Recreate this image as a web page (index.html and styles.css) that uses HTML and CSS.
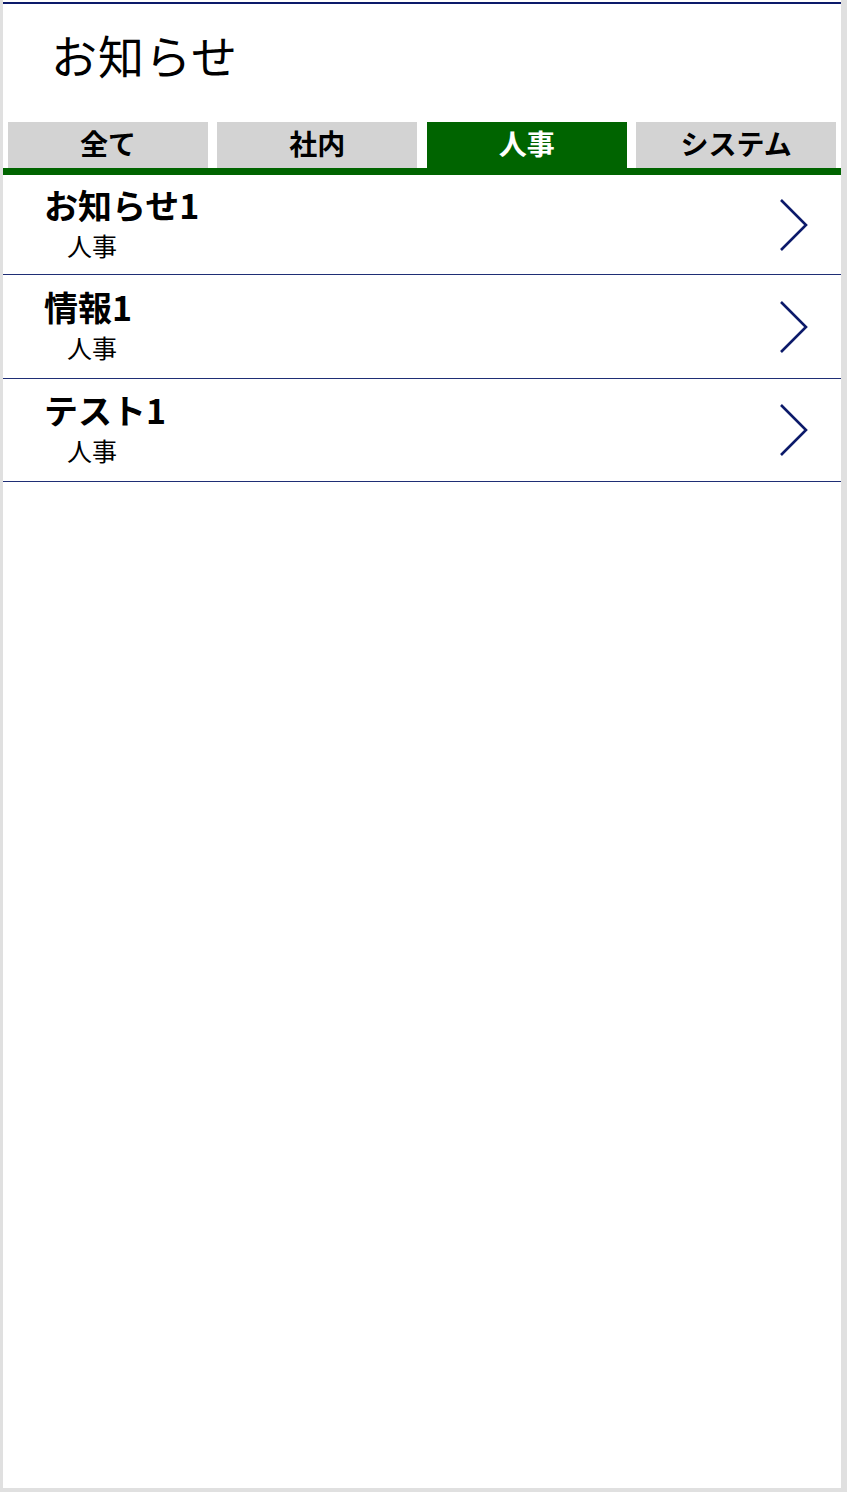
FILE: index.html
```html
<!DOCTYPE html>
<html lang="ja">
<head>
<meta charset="utf-8">
<title>お知らせ</title>
<link rel="stylesheet" href="styles.css">
</head>
<body>
<div class="frame">
  <div class="page">
    <header class="header">
      <h1 class="title">お知らせ</h1>
    </header>
    <nav class="tabs">
      <div class="tab">全て</div>
      <div class="tab">社内</div>
      <div class="tab active">人事</div>
      <div class="tab">システム</div>
    </nav>
    <ul class="list">
      <li class="item">
        <div class="item-text">
          <div class="item-title">お知らせ1</div>
          <div class="item-sub">人事</div>
        </div>
        <svg class="chevron" viewBox="0 0 30 54" width="30" height="54"><polyline points="2,2 27,27 2,52" fill="none" stroke="#0c1a6a" stroke-width="2.6"/></svg>
      </li>
      <li class="item">
        <div class="item-text">
          <div class="item-title">情報1</div>
          <div class="item-sub">人事</div>
        </div>
        <svg class="chevron" viewBox="0 0 30 54" width="30" height="54"><polyline points="2,2 27,27 2,52" fill="none" stroke="#0c1a6a" stroke-width="2.6"/></svg>
      </li>
      <li class="item">
        <div class="item-text">
          <div class="item-title">テスト1</div>
          <div class="item-sub">人事</div>
        </div>
        <svg class="chevron" viewBox="0 0 30 54" width="30" height="54"><polyline points="2,2 27,27 2,52" fill="none" stroke="#0c1a6a" stroke-width="2.6"/></svg>
      </li>
    </ul>
  </div>
</div>
</body>
</html>
```
FILE: styles.css
```css
html, body {
  margin: 0;
  padding: 0;
  background: #e0e0e0;
  font-family: "Noto Sans CJK JP", "Noto Sans", sans-serif;
  color: #000;
}

.frame {
  height: 1492px;
  box-sizing: border-box;
  padding: 0 6px 4px 3px;
}

.frame::before {
  content: "";
  display: block;
  height: 2px;
  background: #fff;
}

.page {
  height: calc(100% - 2px);
  background: #fff;
  border-top: 2px solid #0c1a6a;
  box-sizing: border-box;
}

.header {
  height: 118px;
  box-sizing: border-box;
  padding: 18px 0 0 48px;
}

.title {
  margin: 0;
  font-size: 46px;
  font-weight: 400;
  line-height: 64px;
  letter-spacing: 1px;
}

.tabs {
  display: flex;
  gap: 9.5px;
  padding: 0 5px;
  border-bottom: 7px solid #006400;
}

.tab {
  flex: 1;
  height: 46px;
  background: #d3d3d3;
  text-align: center;
  font-size: 28px;
  font-weight: 700;
  line-height: 42px;
}

.tab.active {
  background: #006400;
  color: #fff;
}

.list {
  list-style: none;
  margin: 0;
  padding: 0;
}

.item {
  display: flex;
  align-items: center;
  justify-content: space-between;
  height: 100px;
  border-bottom: 1px solid #1f2e75;
  box-sizing: border-box;
  padding: 0 32px 0 40px;
}

.item:nth-child(2) {
  height: 104px;
}

.item:nth-child(3) {
  height: 103px;
}

.item-text {
  display: flex;
  flex-direction: column;
  margin-top: -5px;
}

.item-title {
  font-size: 34px;
  font-weight: 700;
  line-height: 44px;
  margin-left: 1px;
  margin-bottom: 1px;
}

.item-sub {
  font-size: 25px;
  font-weight: 400;
  line-height: 34px;
  padding-left: 24px;
}

.chevron {
  display: block;
}
```
